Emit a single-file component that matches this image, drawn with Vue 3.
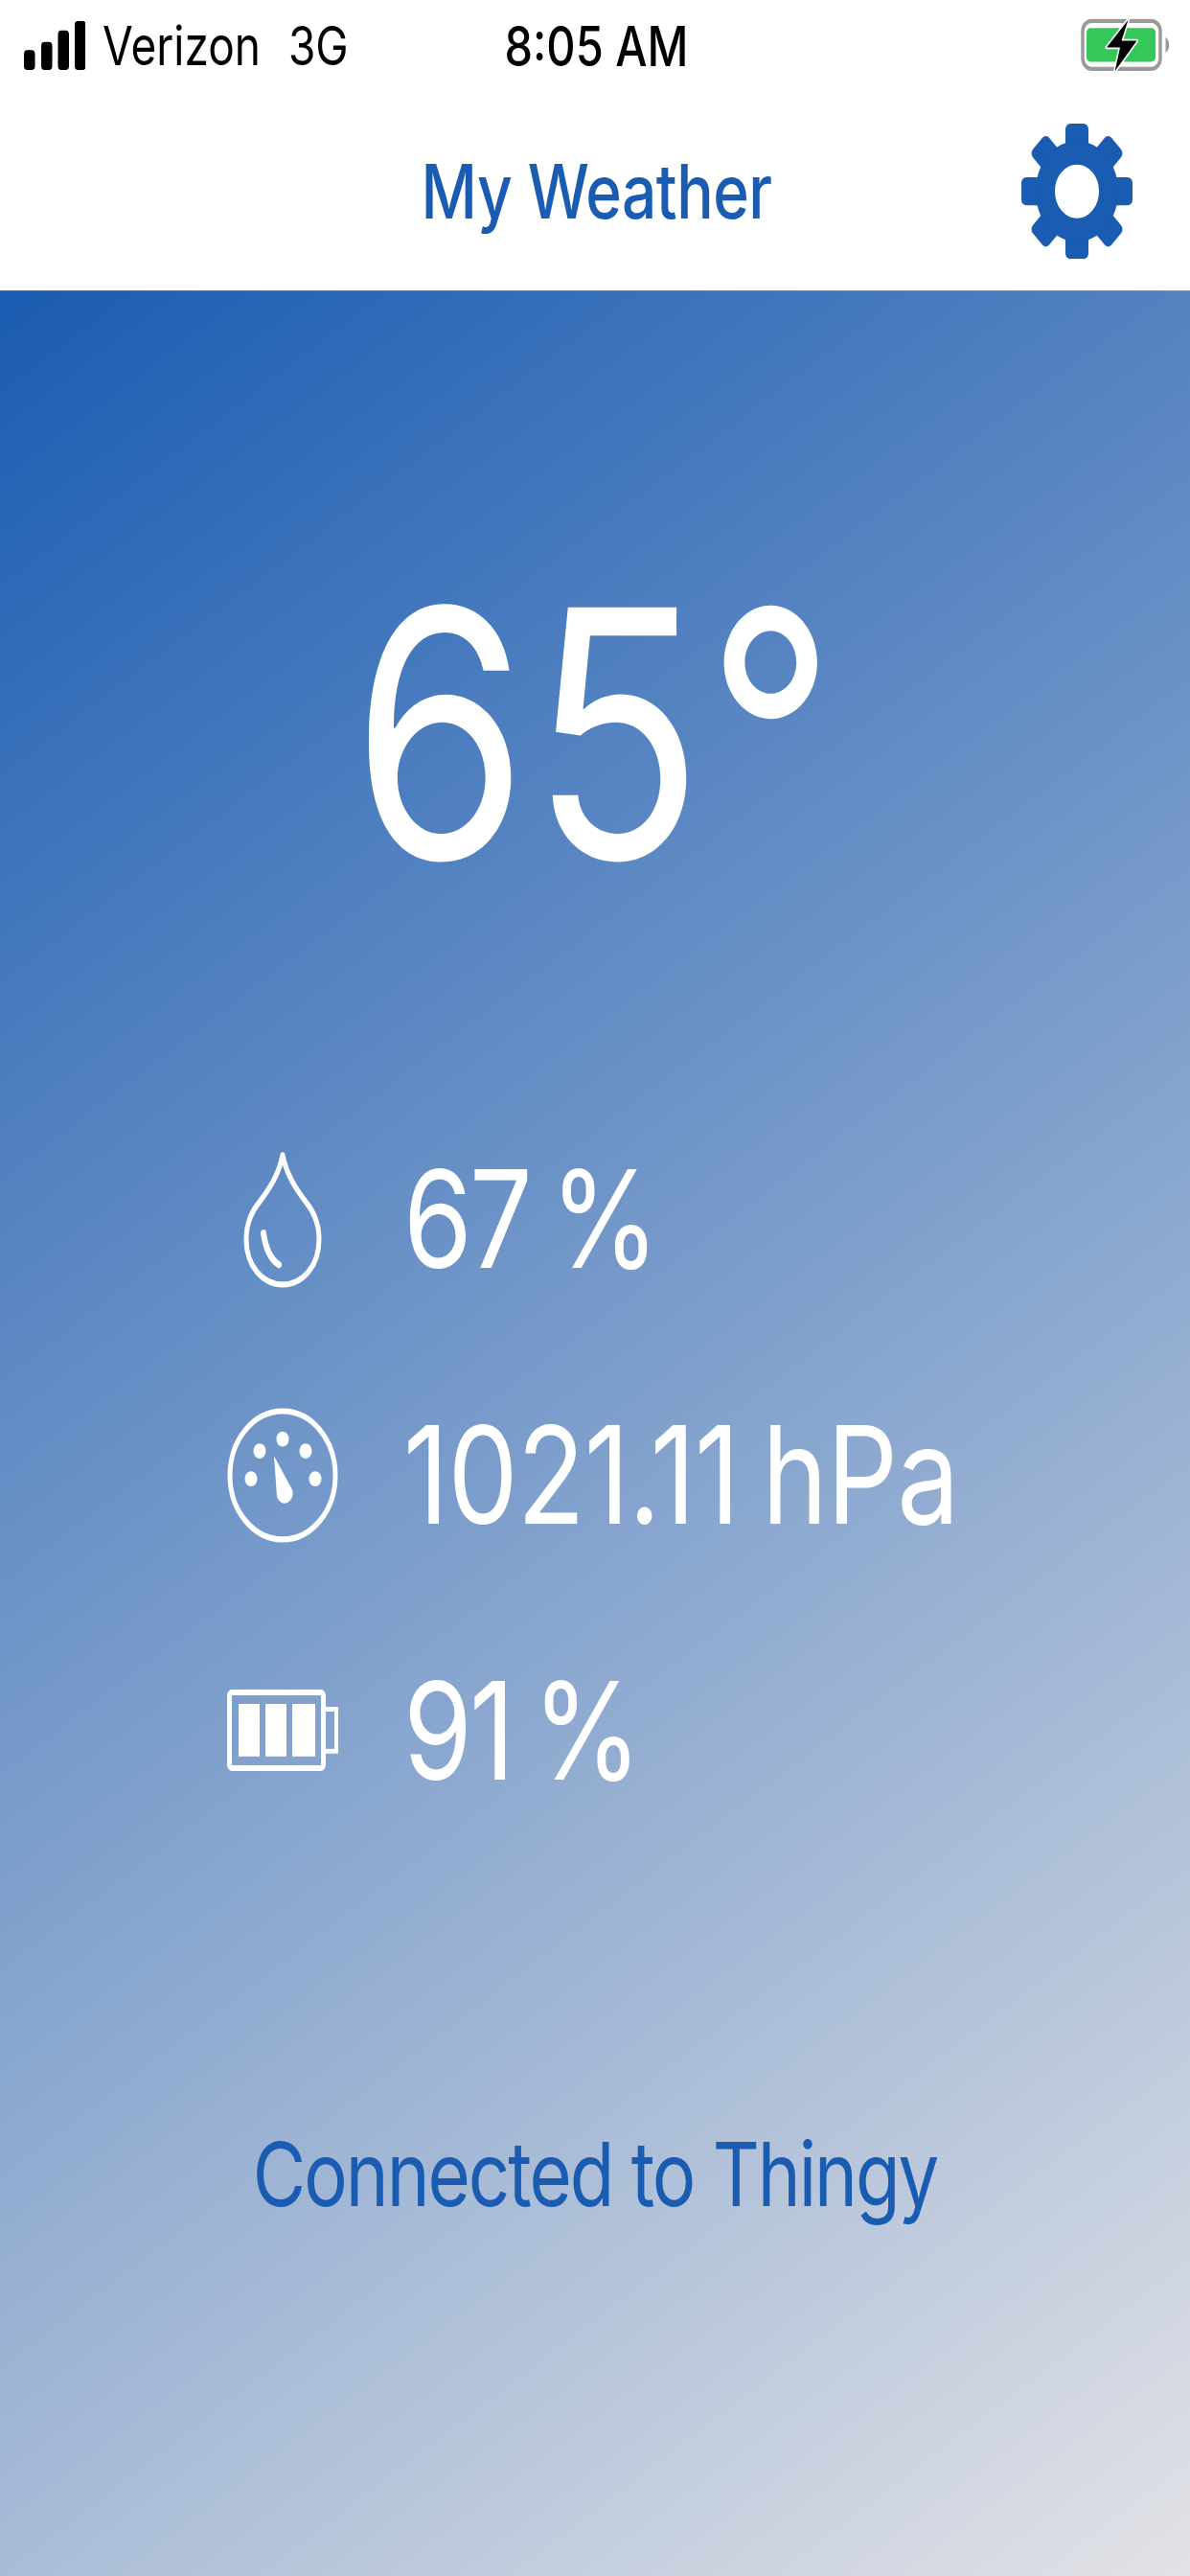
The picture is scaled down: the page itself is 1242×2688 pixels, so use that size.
<script setup>
const bars = [
  { x: 0, y: 25, h: 17 },
  { x: 18, y: 18, h: 24 },
  { x: 35.5, y: 8, h: 34 },
  { x: 53, y: 0, h: 42 },
];
const teeth = [0, 45, 90, 135, 180, 225, 270, 315];
const dots = [
  { x: 58, y: 27.5 },
  { x: 34, y: 37.7 },
  { x: 82, y: 37.7 },
  { x: 25, y: 61.5 },
  { x: 92, y: 61.5 },
];
const cells = [12, 40, 68];
</script>

<template>
  <div class="page">
    <div class="screen">
      <header class="status">
        <div class="carrier">
          <svg class="signal" width="64" height="42" viewBox="0 0 64 42">
            <rect v-for="b in bars" :key="b.x" :x="b.x" :y="b.y" width="11.5" :height="b.h" rx="3.5" fill="#000" />
          </svg>
          <span>Verizon</span>
          <span class="network">3G</span>
        </div>
        <div class="time">8:05 AM</div>
        <svg class="power" width="92" height="46" viewBox="0 0 92 46">
          <rect x="2" y="2" width="81" height="41" rx="9" fill="none" stroke="#9a9a9a" stroke-width="3.5" />
          <rect x="6" y="8" width="72" height="29" rx="4" fill="#34c759" />
          <path d="M88.5 16 a6 7 0 0 1 0 13z" fill="#9a9a9a" />
          <path d="M49.5 1 L27 24.6 H41 L35.6 45 L58.6 19 H42.5Z" fill="#000" stroke="#fff" stroke-width="3" paint-order="stroke" stroke-linejoin="round" />
        </svg>
      </header>

      <nav class="bar">
        <span></span>
        <h1>My Weather</h1>
        <svg class="gear" width="116" height="116" viewBox="-58 -58 116 116">
          <rect v-for="t in teeth" :key="t" x="-12" y="-58" width="24" height="26" rx="5" fill="#1a5cb2" :transform="`rotate(${t})`" />
          <circle r="33" fill="none" stroke="#1a5cb2" stroke-width="20" />
        </svg>
      </nav>

      <main class="content">
        <div class="temp">65°</div>

        <ul class="readings">
          <li>
            <span class="icon">
              <svg width="82" height="117" viewBox="0 0 82 117" fill="none" stroke="#fff" stroke-width="5" stroke-linecap="round">
                <path d="M41 3 C45 20 55 32 65 43 C74 52 79 62 79 75 C79 98 62 114 41 114 C20 114 3 98 3 75 C3 62 8 52 17 43 C27 32 37 20 41 3Z" stroke-linejoin="round" />
                <path d="M21 70 C23 82 28 92 37 97" stroke-width="6" />
              </svg>
            </span>
            <span>67 %</span>
          </li>
          <li>
            <span class="icon">
              <svg width="116" height="117" viewBox="0 0 116 117">
                <circle cx="58" cy="58.5" r="55" fill="none" stroke="#fff" stroke-width="5" />
                <circle v-for="d in dots" :key="d.x" :cx="d.x" :cy="d.y" r="6.5" fill="#fff" />
                <path d="M49 42 L68 71 A8.5 8.5 0 1 1 52 77Z" fill="#fff" />
              </svg>
            </span>
            <span class="pressure">1021.11 hPa</span>
          </li>
          <li>
            <span class="icon">
              <svg width="116" height="70" viewBox="0 0 116 70" fill="#fff">
                <rect x="2.5" y="2.5" width="98" height="65" rx="3" fill="none" stroke="#fff" stroke-width="5" />
                <rect v-for="c in cells" :key="c" :x="c" y="12.5" :width="c === 68 ? 24 : 22" height="45" />
                <rect x="101" y="17" width="13" height="36" fill="none" stroke="#fff" stroke-width="4" />
              </svg>
            </span>
            <span>91 %</span>
          </li>
        </ul>

        <p class="connection">Connected to Thingy</p>
      </main>
    </div>
  </div>
</template>

<style scoped>
.page {
  width: 1242px;
  height: 2688px;
  overflow: hidden;
}
/* the shot is a 1242x2208 screen stretched to 2688 tall */
.screen {
  width: 1242px;
  height: 2208px;
  transform: scaleY(1.2174);
  transform-origin: top left;
  display: flex;
  flex-direction: column;
  background: #fff;
  font-family: Inter, Roboto, "Liberation Sans", sans-serif;
}

.status {
  height: 78px;
  display: grid;
  grid-template-columns: 1fr auto 1fr;
  align-items: center;
  padding: 0 22px 0 25px;
  font-size: 46px;
  color: #000;
}
.carrier {
  display: flex;
  align-items: center;
}
.signal {
  margin-right: 18px;
}
.network {
  margin-left: 29px;
}
.time {
  font-size: 47px;
  font-weight: 500;
}
.power {
  justify-self: end;
}

.bar {
  height: 171px;
  display: grid;
  grid-template-columns: 1fr auto 1fr;
  align-items: center;
  padding: 0 60px 0 63px;
}
.bar h1 {
  margin: 0;
  font-size: 64px;
  font-weight: 500;
  letter-spacing: -0.5px;
  color: #1a5cb2;
}
.gear {
  justify-self: end;
}

.content {
  flex: 1;
  display: flex;
  flex-direction: column;
  align-items: center;
  background: linear-gradient(148deg, #1a5cb2 0%, #e2e2e6 100%);
  color: #fff;
}
.temp {
  margin-top: 179px;
  font-size: 296px;
  font-weight: 400;
  line-height: 400px;
  letter-spacing: 3px;
}
.readings {
  list-style: none;
  margin: 147px 0 0;
  padding: 0 0 0 237px;
  align-self: stretch;
  display: flex;
  flex-direction: column;
  gap: 79px;
  font-size: 116px;
  font-weight: 400;
  letter-spacing: -3px;
  word-spacing: -8px;
}
.readings li {
  height: 140px;
  display: flex;
  align-items: center;
  gap: 68px;
}
.pressure {
  letter-spacing: -0.8px;
}
.icon {
  width: 116px;
  display: flex;
  justify-content: center;
}
.connection {
  margin: 264px 0 0;
  font-size: 76px;
  font-weight: 400;
  letter-spacing: -2px;
  color: #1a5cb2;
}
</style>
